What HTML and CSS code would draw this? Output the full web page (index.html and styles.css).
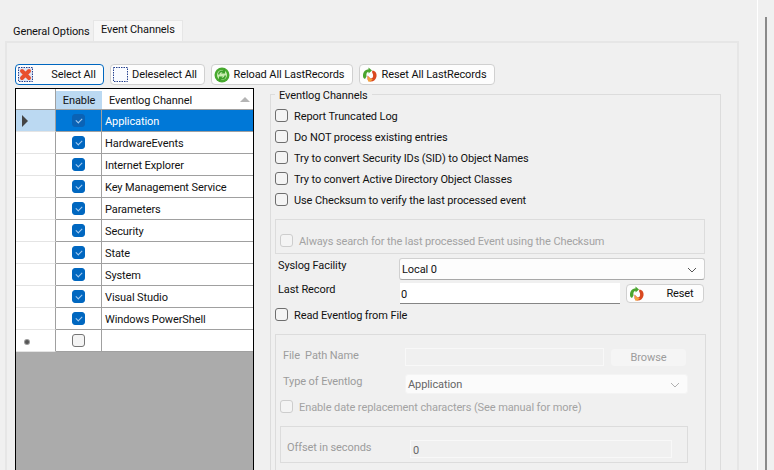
FILE: index.html
```html
<!DOCTYPE html>
<html lang="en">
<head>
  <meta charset="UTF-8">
  <title>Event Channels</title>
  <link rel="stylesheet" href="styles.css">
</head>
<body>

<svg class="defs" width="0" height="0">
  <symbol id="icon-reset" viewBox="0 0 16 16">
    <path d="M1 9C1 5 3 2.500 6.500 2.500V0.500L10 3.500L6.500 6.500V4.800C5 5 4 6.500 4.500 9.500L3 12C1.800 11.500 1 10.500 1 9Z" fill="#4aa52e"/>
    <path d="M10.500 3.500C13.500 4 15 6.500 14.500 9.500C14 13 11 15 8 14.500C6 14.200 5.500 13 5.500 12L5.500 8.500L8.500 11.500C10.500 11.500 11.500 10 11 7.500L10 5Z" fill="#d9481f"/>
    <path d="M6 9.500L9 12H11L8.500 14.500H6Z" fill="#f3a13c"/>
  </symbol>
</svg>

<div class="window">
  <div class="tabs">
    <div class="tab">General Options</div>
    <div class="tab active">Event Channels</div>
  </div>

  <div class="tab-panel">
    <div class="toolbar">
      <button class="btn default select-all">
        <svg class="icon" viewBox="0 0 16 16">
          <rect x="0.500" y="0.500" width="14" height="14" fill="#dfe6f5" stroke="#24418f" stroke-dasharray="1.500 1"/>
          <path d="M4 4L11 11M11 4L4 11" stroke="#e8502f" stroke-width="4" stroke-linecap="round"/>
        </svg>
        <span>Select All</span>
      </button>
      <button class="btn deselect-all">
        <svg class="icon" viewBox="0 0 16 16">
          <rect x="0.500" y="0.500" width="14" height="14" fill="#f9fbff" stroke="#24418f" stroke-dasharray="1.500 1"/>
        </svg>
        <span>Deleselect All</span>
      </button>
      <button class="btn reload-all">
        <svg class="icon" viewBox="0 0 16 16">
          <circle cx="8" cy="8" r="7.500" fill="#47a92e"/>
          <circle cx="8" cy="8" r="5" fill="#c8ecb0"/>
          <path d="M4 7.500C4 5 6 3 8.500 3.500L11 2V6.500H7L8.500 5.500C7 5 5.500 6 5.500 7.500ZM12 8.500C12 11 10 13 7.500 12.500L5 14V9.500H9L7.500 10.500C9 11 10.500 10 10.500 8.500Z" fill="#3c9f2a"/>
        </svg>
        <span>Reload All LastRecords</span>
      </button>
      <button class="btn reset-all">
        <svg class="icon"><use href="#icon-reset"/></svg>
        <span>Reset All LastRecords</span>
      </button>
    </div>

    <div class="content">
      <div class="grid">
        <div class="row head">
          <div class="cell rh"></div>
          <div class="cell enable sorted">Enable</div>
          <div class="cell name">Eventlog Channel<i class="sort"></i></div>
        </div>
        <div class="row selected">
          <div class="cell rh"><i class="arrow"></i></div>
          <div class="cell enable"><i class="cb on"></i></div>
          <div class="cell name">Application</div>
        </div>
        <div class="row">
          <div class="cell rh"></div>
          <div class="cell enable"><i class="cb on"></i></div>
          <div class="cell name">HardwareEvents</div>
        </div>
        <div class="row">
          <div class="cell rh"></div>
          <div class="cell enable"><i class="cb on"></i></div>
          <div class="cell name">Internet Explorer</div>
        </div>
        <div class="row">
          <div class="cell rh"></div>
          <div class="cell enable"><i class="cb on"></i></div>
          <div class="cell name">Key Management Service</div>
        </div>
        <div class="row">
          <div class="cell rh"></div>
          <div class="cell enable"><i class="cb on"></i></div>
          <div class="cell name">Parameters</div>
        </div>
        <div class="row">
          <div class="cell rh"></div>
          <div class="cell enable"><i class="cb on"></i></div>
          <div class="cell name">Security</div>
        </div>
        <div class="row">
          <div class="cell rh"></div>
          <div class="cell enable"><i class="cb on"></i></div>
          <div class="cell name">State</div>
        </div>
        <div class="row">
          <div class="cell rh"></div>
          <div class="cell enable"><i class="cb on"></i></div>
          <div class="cell name">System</div>
        </div>
        <div class="row">
          <div class="cell rh"></div>
          <div class="cell enable"><i class="cb on"></i></div>
          <div class="cell name">Visual Studio</div>
        </div>
        <div class="row">
          <div class="cell rh"></div>
          <div class="cell enable"><i class="cb on"></i></div>
          <div class="cell name">Windows PowerShell</div>
        </div>
        <div class="row new">
          <div class="cell rh"><i class="star"></i></div>
          <div class="cell enable"><i class="cb"></i></div>
          <div class="cell name"></div>
        </div>
      </div>

      <div class="group main-group">
        <div class="legend">Eventlog Channels</div>
        <label class="check"><i class="box"></i>Report Truncated Log</label>
        <label class="check"><i class="box"></i>Do NOT process existing entries</label>
        <label class="check"><i class="box"></i>Try to convert Security IDs (SID) to Object Names</label>
        <label class="check"><i class="box"></i>Try to convert Active Directory Object Classes</label>
        <label class="check"><i class="box"></i>Use Checksum to verify the last processed event</label>

        <div class="sub checksum">
          <label class="check disabled"><i class="box"></i>Always search for the last processed Event using the Checksum</label>
        </div>

        <div class="form-row facility">
          <span class="label">Syslog Facility</span>
          <div class="combo">Local 0<svg class="chevron" viewBox="0 0 10 6"><path d="M1 1L5 5L9 1" fill="none" stroke="#555"/></svg></div>
        </div>
        <div class="form-row record">
          <span class="label">Last Record</span>
          <div class="input">0</div>
          <button class="btn reset">
            <svg class="icon"><use href="#icon-reset"/></svg>
            <span>Reset</span>
          </button>
        </div>
        <label class="check read-file"><i class="box"></i>Read Eventlog from File</label>

        <div class="sub file disabled-group">
          <div class="form-row path">
            <span class="label">File&nbsp; Path Name</span>
            <div class="input off"></div>
            <button class="btn browse">Browse</button>
          </div>
          <div class="form-row type">
            <span class="label">Type of Eventlog</span>
            <div class="combo off">Application<svg class="chevron" viewBox="0 0 10 6"><path d="M1 1L5 5L9 1" fill="none" stroke="#b0b0b0"/></svg></div>
          </div>
          <label class="check disabled date"><i class="box"></i>Enable date replacement characters (See manual for more)</label>
          <div class="sub offset">
            <span class="label">Offset in seconds</span>
            <div class="input off">0</div>
          </div>
        </div>
      </div>
    </div>
  </div>
</div>

<div class="side">
  <div class="thumb"></div>
</div>

</body>
</html>
```

FILE: styles.css
```css
* {
  box-sizing: border-box;
}

html, body {
  height: 470px;
  overflow: hidden;
}

body {
  margin: 0;
  display: flex;
  background: #f0f0f0;
  color: #111;
  font-family: Roboto, sans-serif;
  font-size: 11px;
  letter-spacing: -0.1px;
  line-height: 16px;
}

.defs {
  position: absolute;
}

.window {
  width: 757px;
  flex: none;
}

.side {
  flex: 1;
  border-left: 1px solid #fff;
  padding: 17px 0 0 7px;
}

.thumb {
  width: 2px;
  height: 453px;
  background: #8a8a8a;
}

/* tabs */
.tabs {
  display: flex;
  align-items: flex-end;
  height: 41px;
  padding: 20px 0 0 7px;
}

.tab {
  width: 86px;
  height: 17px;
  padding-left: 6px;
  white-space: nowrap;
}

.tab.active {
  width: 90px;
  height: 21px;
  padding: 1px 0 0 7px;
  border: 1px solid #e6e6e6;
  border-bottom: none;
  background: #f7f7f7;
}

.tab-panel {
  width: 734px;
  height: 429px;
  margin-left: 5px;
  padding: 21px 0 0 8px;
  border: 2px solid #e6e6e6;
  border-bottom: none;
  overflow: hidden;
}

/* buttons */
.toolbar {
  display: flex;
  gap: 6px;
  height: 21px;
}

.btn {
  display: flex;
  align-items: center;
  height: 21px;
  padding: 0 4px 0 2px;
  background: #fdfdfd;
  border: 1px solid #d0d0d0;
  border-radius: 4px;
  color: #111;
  font: inherit;
  letter-spacing: inherit;
  white-space: nowrap;
}

.btn.default {
  border-color: #0067c0;
}

.btn span {
  flex: 1;
  text-align: center;
}

.icon {
  width: 16px;
  height: 16px;
  flex: none;
}

.select-all {
  width: 89px;
}

.select-all span {
  padding-left: 14px;
}

.deselect-all {
  width: 95px;
}

.reload-all {
  width: 142px;
}

.reset-all {
  width: 136px;
}

/* data grid */
.content {
  display: flex;
  margin-top: 3px;
}

.grid {
  width: 239px;
  height: 400px;
  flex: none;
  background: #ababab;
  border: 1px solid #000;
  border-bottom: none;
}

.row {
  display: flex;
  height: 22px;
  background: #fff;
  border-bottom: 1px solid #a0a0a0;
}

.row.head {
  height: 21px;
}

.cell {
  display: flex;
  align-items: center;
  flex: none;
}

.rh {
  width: 40px;
  margin-bottom: -1px;
  padding-left: 6px;
  border-bottom: 1px solid #e4e4e4;
  border-right: 1px solid #a0a0a0;
}

.enable {
  width: 46px;
  justify-content: center;
  border-right: 1px solid #a0a0a0;
}

.name {
  width: 151px;
  padding: 2px 0 0 3px;
  white-space: nowrap;
}

.head .rh {
  border-bottom: 1px solid #a0a0a0;
}

.head .name {
  position: relative;
  padding: 3px 0 0 7px;
}

.sorted {
  margin-top: 2px;
  padding-top: 1px;
  background: #bbd9f2;
  border-right: none;
}

.sort {
  position: absolute;
  right: 3px;
  top: 8px;
  border: 5px solid transparent;
  border-top: none;
  border-bottom: 5px solid #b4b4b4;
}

.selected .rh {
  background: #bbd9f2;
}

.selected .enable, .selected .name {
  background: #0078d7;
  color: #fff;
}

.arrow {
  border: 6px solid transparent;
  border-left: 6px solid #444;
  border-right: none;
}

.star {
  width: 4px;
  height: 4px;
  margin-left: 3px;
  margin-top: 2px;
  border-radius: 50%;
  background: #555;
  box-shadow: 0 0 0 1px #999;
}

.cb {
  position: relative;
  width: 13px;
  height: 13px;
  border: 1px solid #757575;
  border-radius: 3px;
  background: #f4f4f4;
}

.cb.on {
  border-color: #0067c0;
  background: #0067c0;
}

.selected .cb.on {
  border-color: #0a62b5;
  background: #0a62b5;
}

.cb.on::after {
  content: "";
  position: absolute;
  left: 3px;
  top: 3px;
  width: 5px;
  height: 3px;
  border-left: 1px solid #a9cdf0;
  border-bottom: 1px solid #a9cdf0;
  transform: rotate(-45deg);
}

/* group boxes */
.group {
  width: 451px;
  height: 400px;
  flex: none;
  margin: 6px 0 0 16px;
  padding: 0 15px 0 4px;
  border: 1px solid #dcdcdc;
  border-bottom: none;
}

.legend {
  width: max-content;
  height: 18px;
  margin: -8px 0 0;
  padding: 0 4px;
  background: linear-gradient(#f0f0f0 12px, transparent 12px);
  line-height: 18px;
}

.check {
  display: flex;
  align-items: center;
  gap: 6px;
  height: 21px;
  padding-top: 2px;
  white-space: nowrap;
}

.box {
  width: 13px;
  height: 13px;
  flex: none;
  margin-top: -2px;
  border: 1px solid #6e6e6e;
  border-radius: 3px;
  background: #f4f4f4;
}

.check.disabled {
  color: #a3a3a3;
}

.check.disabled .box {
  border-color: #cdcdcd;
}

.sub {
  border: 1px solid #dcdcdc;
}

.checksum {
  height: 35px;
  margin-top: 9px;
  padding: 10px 0 0 4px;
}

.form-row {
  display: flex;
}

.label {
  flex: none;
  width: 124px;
  padding-left: 3px;
  white-space: nowrap;
}

.combo {
  display: flex;
  align-items: center;
  justify-content: space-between;
  width: 306px;
  height: 22px;
  padding: 1px 7px 0 2px;
  background: #fdfdfd;
  border: 1px solid #d0d0d0;
  border-bottom-color: #a8a8a8;
  border-radius: 3px;
}

.chevron {
  width: 10px;
  height: 6px;
}

.input {
  width: 220px;
  height: 21px;
  padding: 4px 0 0 1px;
  background: #fff;
  border-bottom: 1px solid #858585;
}

.facility {
  margin-top: 4px;
}

.record {
  margin-top: 3px;
}

.record .label {
  width: 125px;
  margin-top: -1px;
}

.reset {
  width: 78px;
  height: 19px;
  margin: 1px 0 0 6px;
}

.reset span {
  padding-left: 16px;
}

.read-file {
  margin-top: 0;
}

/* disabled file section */
.file {
  width: 431px;
  height: 200px;
  margin-top: 9px;
  padding: 13px 0 0 4px;
  color: #9c9c9c;
}

.file .label {
  width: 125px;
  padding-left: 3px;
}

.input.off {
  width: 199px;
  height: 18px;
  padding: 0;
  background: #f0f0f0;
  border: 1px solid #f8f8f8;
}

.browse {
  justify-content: center;
  width: 77px;
  height: 19px;
  margin-left: 6px;
  padding: 0;
  background: #f5f5f5;
  border-color: #f0f0f0;
  color: #9c9c9c;
}

.type {
  margin-top: 7px;
}

.combo.off {
  width: 283px;
  height: 20px;
  padding-top: 2px;
  color: #666;
  background: #fbfbfb;
  border-color: #f4f4f4;
}

.date {
  margin-top: 2px;
}

.offset {
  display: flex;
  width: 408px;
  height: 37px;
  margin: 9px 0 0 0;
  padding: 13px 0 0 6px;
}

.file .offset .label {
  width: 123px;
  padding-left: 0;
}

.offset .input.off {
  width: 262px;
  height: 18px;
  padding: 2px 0 0 2px;
  color: #666;
}
```
